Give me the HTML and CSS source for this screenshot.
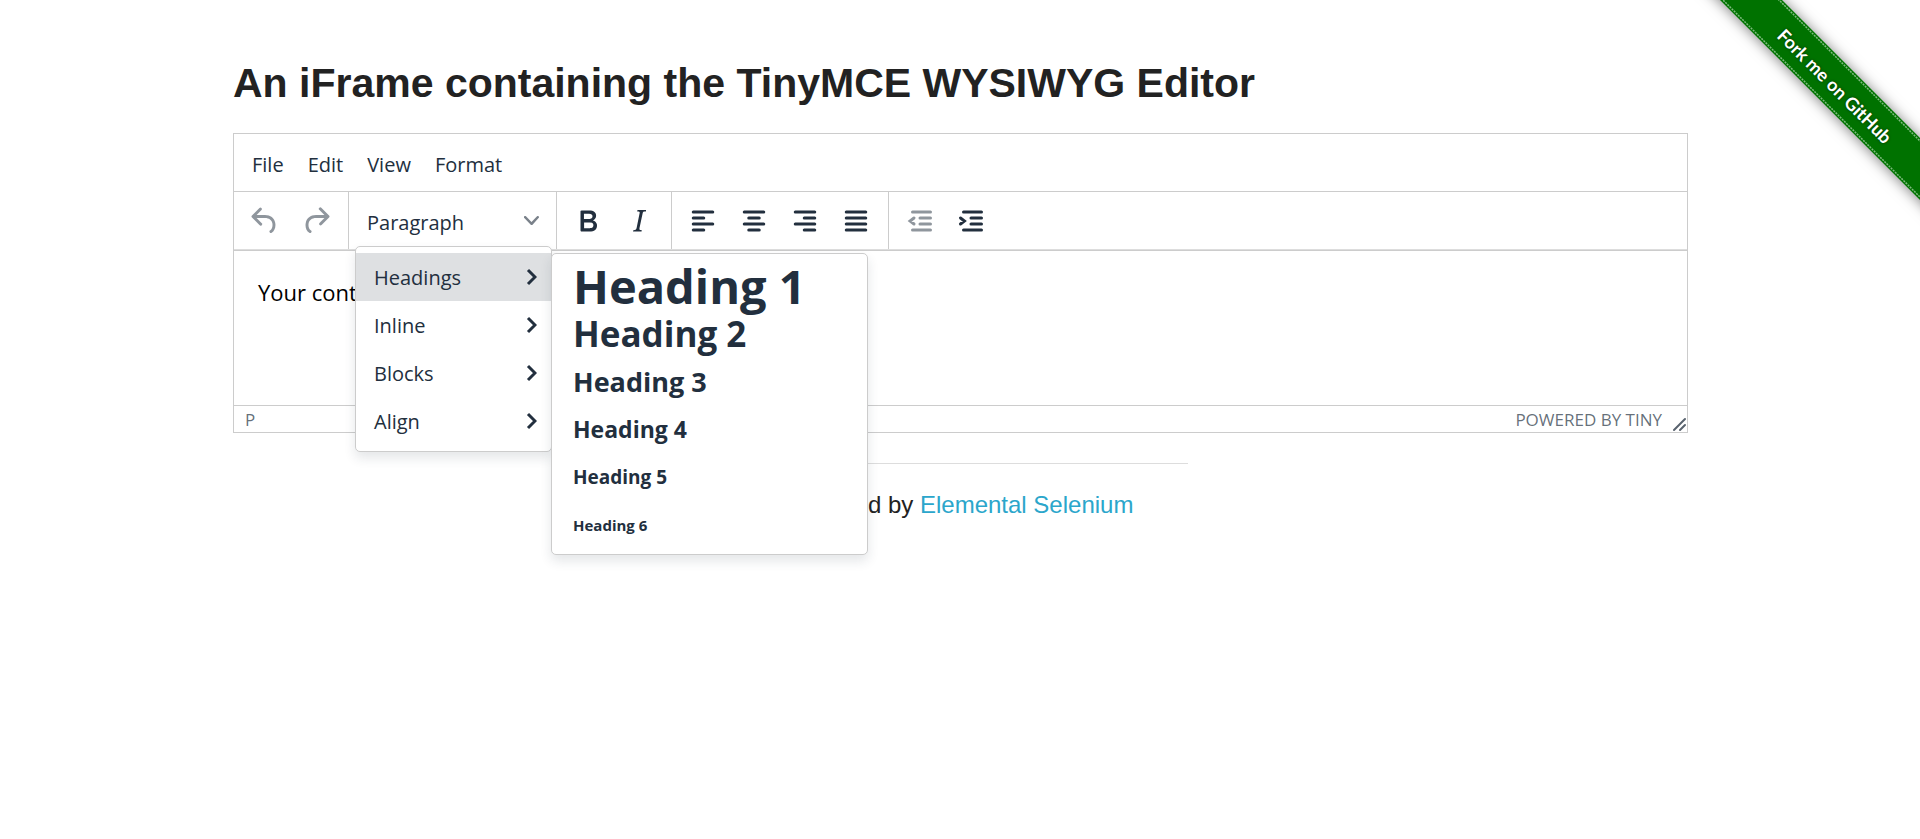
FILE: index.html
```html
<!DOCTYPE html>
<html lang="en">
<head>
<meta charset="utf-8">
<title>The Internet</title>
<link rel="stylesheet" href="styles.css">
</head>
<body>
<a class="ribbon" href="#" aria-label="Fork me on GitHub">
  <svg width="230" height="230" viewBox="0 0 230 230">
    <defs><filter id="shade" x="-20%" y="-20%" width="140%" height="140%"><feDropShadow dx="0" dy="1" stdDeviation="7" flood-color="#000" flood-opacity=".5"/></filter></defs>
    <path d="M10-20 250 220 250 158 72-20z" fill="#007200" filter="url(#shade)"/>
    <path d="M12-21 252 219M71-18 249 160" fill="none" stroke="#7fbb7f" stroke-width="1.5" stroke-dasharray="2 1"/>
    <text class="ribbon-text" transform="translate(145 86) rotate(45)" text-anchor="middle" dominant-baseline="central">Fork me on GitHub</text>
  </svg>
</a>
<main class="row">
  <h1 class="title">An iFrame containing the TinyMCE WYSIWYG Editor</h1>
  <div class="editor">
    <div class="menubar" role="menubar">
      <button class="menubar-item">File</button>
      <button class="menubar-item">Edit</button>
      <button class="menubar-item">View</button>
      <button class="menubar-item">Format</button>
    </div>
    <div class="toolbar" role="toolbar">
      <div class="group">
        <button class="tool" disabled aria-label="Undo"><svg class="icon" viewBox="0 0 24 24"><path d="M6.4 8H12c3.7 0 6.2 2 6.8 5.1.6 2.7-.4 5.6-2.3 6.8a1 1 0 01-1-1.8c1.1-.6 1.8-2.7 1.4-4.6-.5-2.1-2.1-3.5-4.9-3.5H6.4l3.3 3.3a1 1 0 11-1.4 1.4l-5-5a1 1 0 010-1.4l5-5a1 1 0 011.4 1.4L6.4 8z"/></svg></button>
        <button class="tool" disabled aria-label="Redo"><svg class="icon" viewBox="0 0 24 24"><path d="M17.6 10H12c-2.8 0-4.4 1.4-4.9 3.5-.4 2 .3 4 1.4 4.6a1 1 0 11-1 1.8c-2-1.2-2.9-4.1-2.3-6.8.6-3 3-5.1 6.8-5.1h5.6l-3.3-3.3a1 1 0 111.4-1.4l5 5a1 1 0 010 1.4l-5 5a1 1 0 01-1.4-1.4l3.3-3.3z"/></svg></button>
      </div>
      <div class="group">
        <button class="format" aria-haspopup="menu" aria-expanded="true"><span class="format-name">Paragraph</span><svg class="caret" viewBox="0 0 10 10"><path d="M8.7 2.2c.3-.3.8-.3 1 0 .4.4.4.9 0 1.2L5.7 7.8c-.3.3-.9.3-1.2 0L.2 3.4a.8.8 0 010-1.2c.3-.3.8-.3 1.1 0L5 6l3.7-3.8z"/></svg></button>
        <div class="menu formats" role="menu">
          <button class="item active" role="menuitem">Headings<svg class="arrow" viewBox="0 0 11 20"><path d="M2 3l7 7-7 7"/></svg></button>
          <button class="item" role="menuitem">Inline<svg class="arrow" viewBox="0 0 11 20"><path d="M2 3l7 7-7 7"/></svg></button>
          <button class="item" role="menuitem">Blocks<svg class="arrow" viewBox="0 0 11 20"><path d="M2 3l7 7-7 7"/></svg></button>
          <button class="item" role="menuitem">Align<svg class="arrow" viewBox="0 0 11 20"><path d="M2 3l7 7-7 7"/></svg></button>
          <div class="menu headings" role="menu">
            <button class="item h1" role="menuitem">Heading 1</button>
            <button class="item h2" role="menuitem">Heading 2</button>
            <button class="item h3" role="menuitem">Heading 3</button>
            <button class="item h4" role="menuitem">Heading 4</button>
            <button class="item h5" role="menuitem">Heading 5</button>
            <button class="item h6" role="menuitem">Heading 6</button>
          </div>
        </div>
      </div>
      <div class="group">
        <button class="tool" aria-label="Bold"><svg class="icon" viewBox="0 0 24 24"><path d="M7.8 19c-.3 0-.5 0-.6-.2l-.2-.5V5.7c0-.2 0-.4.2-.5l.6-.2h5c1.5 0 2.7.3 3.5 1 .7.6 1.1 1.4 1.1 2.5a3 3 0 01-.6 1.9c-.4.6-1 1-1.6 1.2.4.1.9.3 1.3.6s.8.7 1 1.2c.4.4.5 1 .5 1.6 0 1.3-.4 2.3-1.3 3-.8.7-2.1 1-3.8 1H7.8zm5-8.3c.6 0 1.2-.1 1.6-.5.4-.3.6-.7.6-1.3 0-1.1-.8-1.7-2.3-1.7H9.3v3.5h3.4zm.5 6c.7 0 1.3-.1 1.7-.4.4-.4.6-.9.6-1.5s-.2-1-.7-1.4c-.4-.3-1-.4-2-.4H9.4v3.8h4z"/></svg></button>
        <button class="tool" aria-label="Italic"><svg class="icon" viewBox="0 0 24 24"><path d="M16.7 4.7l-.1.9h-.3c-.6 0-1 0-1.4.3-.3.3-.4.6-.5 1.1l-2.1 9.8v.6c0 .5.4.8 1.4.8h.2l-.2.8H8l.2-.8h.2c1.1 0 1.8-.5 2-1.5l2-9.8.1-.5c0-.6-.4-.8-1.4-.8h-.3l.2-.9h5.8z"/></svg></button>
      </div>
      <div class="group">
        <button class="tool" aria-label="Align left"><svg class="icon lines" viewBox="0 0 24 24"><path d="M5.5 6h13M5.5 10h7M5.5 14h13M5.5 18h7"/></svg></button>
        <button class="tool" aria-label="Align center"><svg class="icon lines" viewBox="0 0 24 24"><path d="M5.5 6h13M8.5 10h7M5.5 14h13M8.5 18h7"/></svg></button>
        <button class="tool" aria-label="Align right"><svg class="icon lines" viewBox="0 0 24 24"><path d="M5.5 6h13M11.5 10h7M5.5 14h13M11.5 18h7"/></svg></button>
        <button class="tool" aria-label="Justify"><svg class="icon lines" viewBox="0 0 24 24"><path d="M5.5 6h13M5.5 10h13M5.5 14h13M5.5 18h13"/></svg></button>
      </div>
      <div class="group">
        <button class="tool" disabled aria-label="Decrease indent"><svg class="icon lines" viewBox="0 0 24 24"><path d="M7 6h12M12 10h7M12 14h7M7 18h12M8 10l-2.6 2L8 14"/></svg></button>
        <button class="tool" aria-label="Increase indent"><svg class="icon lines" viewBox="0 0 24 24"><path d="M7 6h12M12 10h7M12 14h7M7 18h12M5 10l2.6 2L5 14"/></svg></button>
      </div>
    </div>
    <div class="content" contenteditable="true" role="textbox" aria-label="Rich text area"><p class="paragraph">Your content goes here.</p></div>
    <div class="status">
      <span>P</span>
      <a class="brand" href="#">POWERED BY TINY</a>
      <svg class="resize" viewBox="0 0 15 15"><path d="M2 13 13 2M8 13l5-5"/></svg>
    </div>
  </div>
</main>
<footer class="footer">
  <hr class="rule">
  <div>Powered by <a class="link" href="#">Elemental Selenium</a></div>
</footer>
</body>
</html>
```
FILE: styles.css
```css
* { box-sizing: border-box; }
body {
  min-height: 100vh;
  margin: 0;
  background: #fff;
  color: #222;
  font-family: "Liberation Sans", Arial, sans-serif;
  font-size: 24px;
}
button {
  border: 0;
  background: none;
  color: #222f3e;
  font: inherit;
  text-align: left;
}
.ribbon { position: absolute; top: 0; right: 0; }
.ribbon svg { display: block; }
.ribbon-text {
  fill: #fff;
  font: bold 18px Lato, sans-serif;
  text-shadow: 0 0 3px rgba(0, 0, 0, .6);
}
.row {
  max-width: 1500px;
  margin: 0 auto;
  padding: 54px 22px 0 23px;
}
.title {
  margin: 0 0 20px;
  font-size: 41px;
  line-height: 59px;
}
.editor {
  border: 1px solid #ccc;
  color: #222f3e;
  font-family: "Open Sans", "Segoe UI", sans-serif;
  font-size: 20px;
}
.menubar {
  display: flex;
  align-items: center;
  height: 57px;
  padding: 3px 6px 0;
}
.menubar-item { padding: 0 12px; line-height: 51px; }
.toolbar {
  display: flex;
  height: 59px;
  border-top: 1px solid #ccc;
  border-bottom: 1px solid #ddd;
}
.group {
  position: relative;
  display: flex;
  align-items: center;
  padding: 0 6px;
  border-right: 1px solid #ccc;
}
.group:last-child { border-right: 0; }
.tool {
  display: grid;
  place-items: center;
  width: 51px;
  height: 51px;
  padding: 0 2px 0 0;
}
.tool:disabled { opacity: .5; }
.icon { width: 36px; height: 36px; fill: #222f3e; }
.lines {
  fill: none;
  stroke: #222f3e;
  stroke-width: 2;
  stroke-linecap: round;
}
.format {
  display: flex;
  align-items: center;
  justify-content: space-between;
  width: 195px;
  height: 51px;
  padding: 0 11px 0 12px;
}
.format-name { padding-top: 3px; }
.caret { width: 15px; height: 15px; fill: #222f3e; opacity: .6; }
.menu {
  position: absolute;
  z-index: 2;
  padding: 6px 0;
  border: 1px solid #ccc;
  border-radius: 5px;
  background: #fff;
  box-shadow: 0 6px 12px rgba(34, 47, 62, .12);
}
.formats { top: 54px; left: 6px; width: 197px; }
.headings { top: 6px; left: 195px; width: 317px; }
.item {
  display: flex;
  align-items: center;
  justify-content: space-between;
  width: 100%;
  height: 48px;
  padding: 1px 14px 0 18px;
}
.active { background: #dee0e2; }
.arrow {
  width: 11px;
  height: 20px;
  margin-bottom: 2px;
  fill: none;
  stroke: #222f3e;
  stroke-width: 3;
}
.headings .item { padding: 2px 14px 0 21px; font-weight: bold; white-space: nowrap; }
.headings .h1 { padding-top: 4px; font-size: 47px; line-height: 44px; }
.headings .h2 { font-size: 35px; }
.headings .h3 { font-size: 27px; }
.headings .h4 { font-size: 23px; }
.headings .h5 { font-size: 19px; }
.headings .h6 { font-size: 15px; }
.content {
  height: 155px;
  padding: 24px;
  border-top: 1px solid #ccc;
  color: #000;
  font-size: 22px;
  line-height: 34px;
}
.paragraph { margin: 0; }
.status {
  display: flex;
  align-items: center;
  height: 27px;
  padding: 0 0 0 11px;
  border-top: 1px solid #ccc;
  color: rgba(34, 47, 62, .7);
  font-size: 17px;
}
.brand { margin-left: auto; color: inherit; text-decoration: none; }
.resize {
  align-self: flex-end;
  width: 15px;
  height: 15px;
  margin-left: 10px;
  fill: none;
  stroke: #59636e;
  stroke-width: 2;
  stroke-linecap: round;
}
.footer {
  width: 455px;
  max-width: 100%;
  margin: 30px auto 0;
  text-align: center;
  line-height: 38px;
}
.rule { margin: 0 0 22px; border: 0; border-top: 1px solid #ddd; }
.link { color: #2ba6cb; text-decoration: none; }
```
